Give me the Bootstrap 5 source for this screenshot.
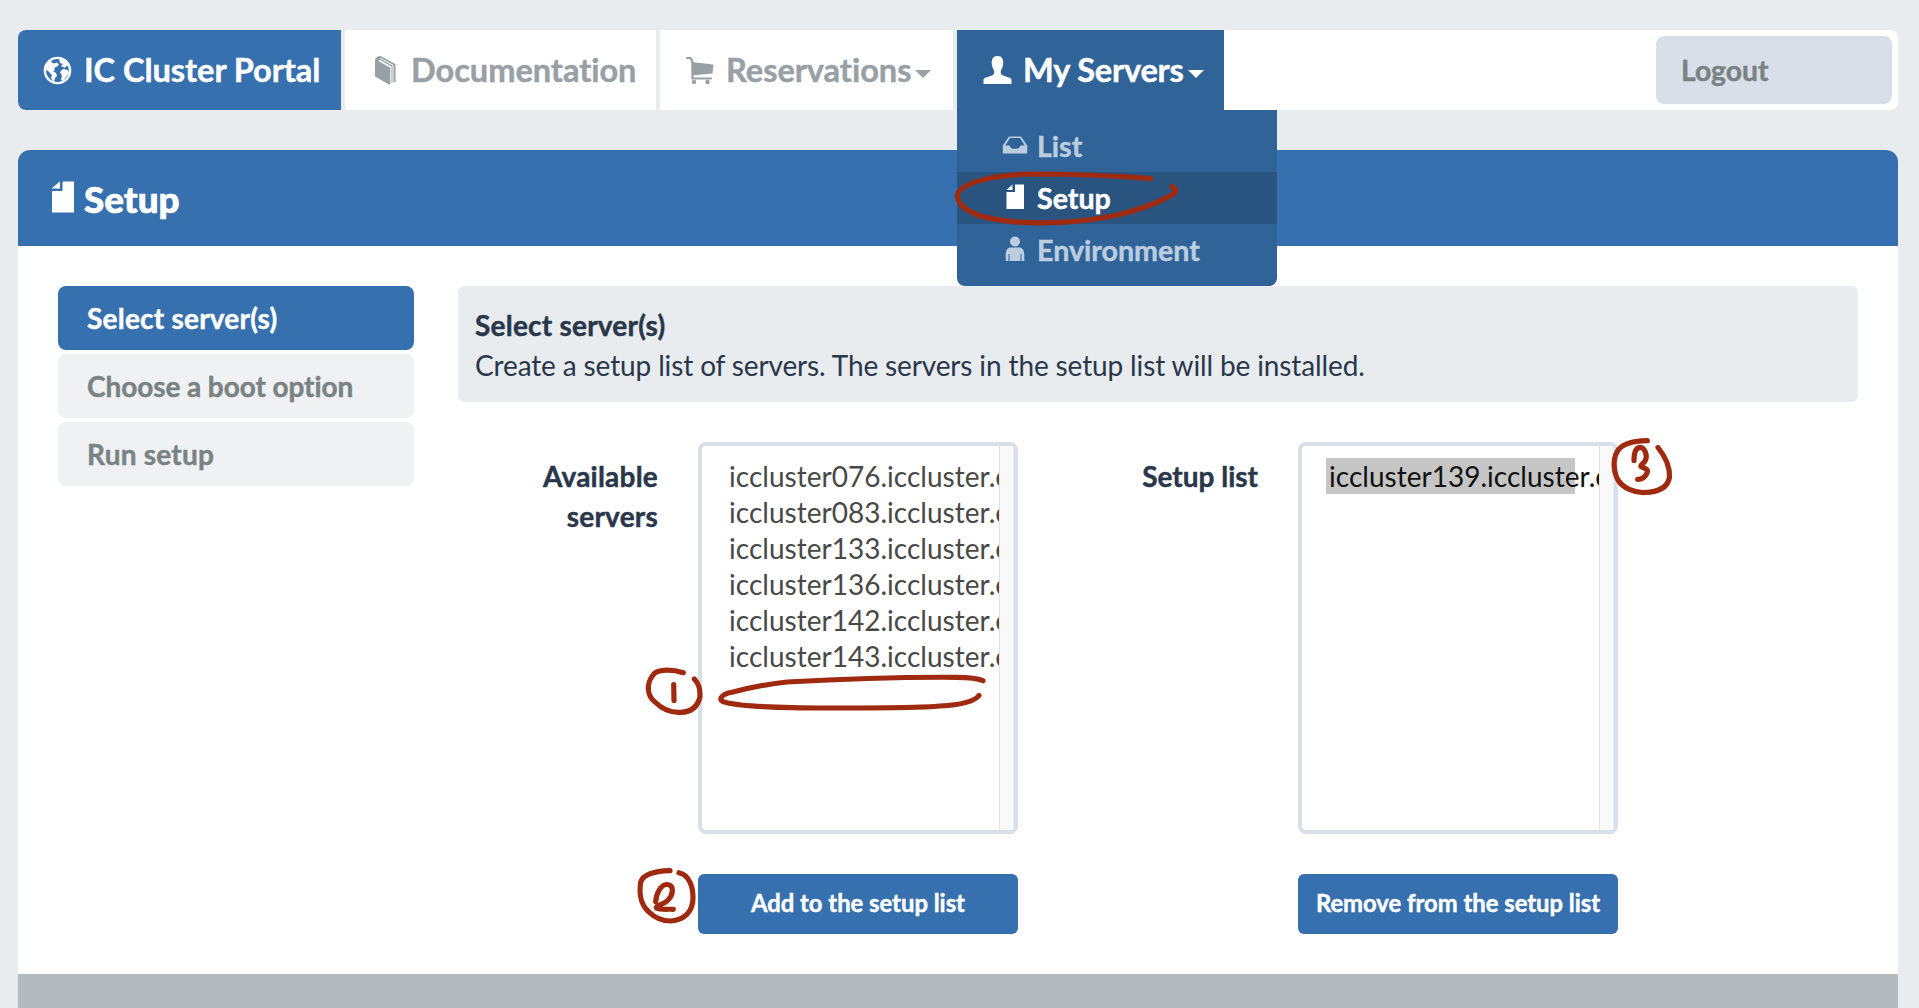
<!DOCTYPE html>
<html lang="en">
<head>
<meta charset="utf-8">
<meta name="viewport" content="width=device-width, initial-scale=1">
<title>IC Cluster Portal - Setup</title>
<link href="https://cdn.jsdelivr.net/npm/bootstrap@5.3.0/dist/css/bootstrap.min.css" rel="stylesheet">
<style>
:root{--ic-blue:#3670ae;--ic-dark:#306398;--ic-bg:#e8ecef;--ic-ink:#2a374b;--ic-border:#d8dfe9}
body{font-family:Lato,"Open Sans",sans-serif;font-size:28px;line-height:40px;color:var(--ic-ink);background:var(--ic-bg);height:1008px;overflow:hidden}
.page-wrap{padding:30px 21px 0 18px}
.ic-nav,.side-nav,.list-label,.btn-ic,.note-box strong{-webkit-text-stroke:.45px currentColor}
.ic-nav{height:80px;background:#fff;border-radius:8px;margin-bottom:40px;font-size:32.6px;font-weight:700;line-height:80px}
.ic-nav>li{border-right:4px solid var(--ic-bg);white-space:nowrap;flex:none}
.ic-nav .nav-link{padding:0;color:#99a0a5;height:80px;display:flex;align-items:center;letter-spacing:-.05px}
.ic-nav .nav-link svg{flex:none}
.li-brand{width:327px}
.li-brand .nav-link{background:var(--ic-blue);color:#fff;border-radius:8px 0 0 8px;padding-left:25px}
.li-docs{width:315px}.li-docs .nav-link{padding-left:30px}
.li-res{width:297px}.li-res .nav-link{padding-left:26px}
.ic-nav>.li-srv{width:267px;border:0}
.li-srv .nav-link,.li-srv .nav-link:hover{background:var(--ic-dark);color:#fff;padding-left:26px}
.li-srv .nav-link span{letter-spacing:-.2px}
.caret-dn{border:8px solid transparent;border-top-color:currentColor;border-bottom:0;margin:8px 0 0 4px}
.ic-menu.dropdown-menu{left:0;top:80px;width:320px;height:176px;margin:0;padding:10px 0;border:0;border-radius:0 0 8px 8px;background:var(--ic-dark);font-size:28.6px}
.ic-menu .dropdown-item{display:flex;align-items:center;height:52px;line-height:52px;padding:0 0 0 45px;font-weight:700;color:#bccde0}
.ic-menu .dropdown-item svg{margin-right:9px;flex:none}
.ic-menu .dropdown-item.active{background:#2a5480;color:#fff}
.btn-out{width:236px;height:68px;border-radius:8px;background:var(--ic-border);color:#7a8384;font-size:28.3px;font-weight:700;text-align:left;padding:0 0 0 24px;margin-right:6px;-webkit-text-stroke:.45px currentColor}
.panel-head{height:96px;border-radius:12px 12px 0 0;background:var(--ic-blue);color:#fff;padding-left:34px}
.panel-head h1{font-size:36.8px;line-height:96px;font-weight:900;margin:2px 0 0 10px;-webkit-text-stroke:.7px currentColor}
.panel-main{background:#fff;height:728px;padding:40px}
.side-nav{width:356px;margin-right:44px;flex:none;gap:4px}
.side-nav .nav-link{height:64px;line-height:65px;padding:0 0 0 29px;border-radius:8px;background:#eff1f3;color:#7a8384;font-weight:700;letter-spacing:-.08px}
.side-nav .nav-link.active{background:var(--ic-blue);color:#fff}
.note-box{background:var(--ic-bg);border-radius:6px;height:116px;padding:19px 17px;margin-bottom:40px}
.note-box p{letter-spacing:-.13px}
.wide-t{letter-spacing:.22px}
.lists-row{padding-left:60px}
.list-label{width:140px;padding-top:14px;margin-right:40px;text-align:right;font-weight:700;color:var(--ic-ink)}
.list-col{width:320px}
.list-box{height:392px;border:4px solid var(--ic-border);border-radius:8px;background:#fff;overflow:hidden;margin-bottom:40px}
.opts{flex:1;min-width:0;overflow:hidden;padding:12px 0 0 24px;white-space:nowrap;line-height:36px;color:#484848;letter-spacing:.02px}
.opts div{padding-left:3px;height:36px;width:249px}
.opts .picked{background:#c6c6c6;color:#111}
.track{width:15px;background:#f9f9f9;border-left:1px solid #e3e3e3;border-right:1px solid #eceff3}
.btn-ic,.btn-ic:hover{height:60px;width:320px;background:var(--ic-blue);color:#fff;border:0;border-radius:6px;font-weight:700;font-size:23.8px;padding:0;white-space:nowrap}
.foot-bar{height:34px;background:#b5babe}
.ink{position:absolute;left:0;top:0;z-index:2000;pointer-events:none}
</style>
<script src="https://cdn.jsdelivr.net/npm/bootstrap@5.3.0/dist/js/bootstrap.bundle.min.js"></script>
</head>
<body>
<div class="page-wrap">
  <ul class="ic-nav nav flex-nowrap align-items-center list-unstyled">
    <li class="li-brand"><a class="nav-link" href="#">
      <svg width="29" height="29" viewBox="0 0 29 29" style="margin-right:12px"><circle cx="14.5" cy="14.5" r="12.6" fill="none" stroke="#fff" stroke-width="2.4"/><path fill="#fff" d="M2 9 6 5 9 4 8 6 11 7.500 14 6.500 16 8.500 13.500 11 11 12 12 14 10 15 13 17 14 20 12 22 11 26 8 22 9 19 5 15 1 13ZM16 3 21 4 26 9 27 11 23 10 22 12 18 10 20 8 17 7ZM17 16 20 13 25 14 26 17 23 21 20 25 18 24 19 20Z"/></svg>
      <span>IC Cluster Portal</span></a></li>
    <li class="li-docs"><a class="nav-link" href="#">
      <svg width="21" height="29" viewBox="0 0 21 29" style="margin-right:15px"><path fill="#99a0a5" d="M0 4.500C0 2 3 0 5.500 0L20.500 8V26L16.500 27V10.500L5 4 3 4.800 15.300 11.800V28.500L13 28 0 20.500Z"/><path fill="none" stroke="#fff" stroke-width="1" d="M5.500 2.400 18 9.200V27"/></svg>
      <span>Documentation</span></a></li>
    <li class="li-res"><a class="nav-link" href="#">
      <svg width="28" height="28" viewBox="0 0 28 28" style="margin-right:12px"><path fill="none" stroke="#99a0a5" stroke-width="2.200" stroke-linecap="round" d="M1 2H4.500L6.500 6V22.500H25"/><path fill="#99a0a5" d="M5.500 6 27.500 8.500 26.500 17.500 6 19.500Z"/><circle cx="8" cy="26" r="2.200" fill="#99a0a5"/><circle cx="21.500" cy="26" r="2.200" fill="#99a0a5"/></svg>
      <span>Reservations</span><i class="caret-dn"></i></a></li>
    <li class="li-srv position-relative"><a class="nav-link" href="#">
      <svg width="29" height="28" viewBox="0 0 29 28" style="margin-right:11px"><path fill="#fff" d="M14.500 0C19 0 20.500 3.500 20.200 7.500 20 11 19 12.500 18 14.500 17.200 17 18 18.500 20 19.500 24 21 28.500 21.500 28.500 24V28H.5V24C.5 21.500 5 21 9 19.500 11 18.500 11.800 17 11 14.500 10 12.500 9 11 8.800 7.500 8.500 3.500 10 0 14.500 0Z"/></svg>
      <span>My Servers</span><i class="caret-dn"></i></a>
      <div class="dropdown-menu ic-menu show">
        <a class="dropdown-item" href="#"><svg width="26" height="18" viewBox="0 0 26 18" style="margin-top:-3px"><path fill="#bccde0" fill-rule="evenodd" d="M7 .5H19L25.200 9.500V17.500H.8V9.500ZM8 2 3.200 9.500H7.500C8.500 12.300 10 12.800 13 12.800S17.500 12.300 18.500 9.500H22.800L18 2Z"/></svg>List</a>
        <a class="dropdown-item active" href="#"><svg width="26" height="26" viewBox="0 0 26 26" style="margin-top:-2px"><path fill="#fff" d="M4.500 8H13V.5H22V25H4.500ZM10.500 .5V6H4.500Z"/></svg>Setup</a>
        <a class="dropdown-item" href="#"><svg width="26" height="26" viewBox="0 0 26 26" style="margin-top:-2px"><circle cx="13" cy="5.500" r="5" fill="#bccde0"/><path fill="#bccde0" d="M7.500 11.500H18.500C21.500 12.500 22.300 16 22.300 19.500V25H19.500V18H18.500V25H7.500V18H6.500V25H3.700V19.500C3.700 16 4.500 12.500 7.500 11.500Z"/></svg>Environment</a>
      </div></li>
    <li class="ms-auto border-0 d-flex align-items-center"><button class="btn btn-out" type="button">Logout</button></li>
  </ul>

  <header class="panel-head d-flex align-items-center">
    <svg width="22" height="32" viewBox="0 0 22 32" style="margin-top:-3px"><path fill="#fff" d="M0 10H10.500V.5H22V31.500H0ZM8 .5V7.500H0V7Z"/></svg>
    <h1>Setup</h1>
  </header>
  <main class="panel-main d-flex align-items-start">
    <nav class="side-nav nav flex-column">
      <a class="nav-link active" href="#"><span class="wide-t">Select server(s)</span></a>
      <a class="nav-link" href="#">Choose a boot option</a>
      <a class="nav-link" href="#"><span class="wide-t">Run setup</span></a>
    </nav>
    <section class="flex-grow-1">
      <div class="note-box"><strong class="d-block wide-t">Select server(s)</strong><p class="m-0">Create a setup list of servers. The servers in the setup list will be installed.</p></div>
      <div class="lists-row d-flex">
        <div class="list-label wide-t">Available servers</div>
        <div class="list-col">
          <div class="list-box d-flex">
            <div class="opts">
              <div>iccluster076.iccluster.epfl.ch</div>
              <div>iccluster083.iccluster.epfl.ch</div>
              <div>iccluster133.iccluster.epfl.ch</div>
              <div>iccluster136.iccluster.epfl.ch</div>
              <div>iccluster142.iccluster.epfl.ch</div>
              <div>iccluster143.iccluster.epfl.ch</div>
            </div>
            <div class="track"></div>
          </div>
          <button class="btn btn-ic" type="button">Add to the setup list</button>
        </div>
        <div class="list-label" style="margin-left:100px">Setup list</div>
        <div class="list-col">
          <div class="list-box d-flex">
            <div class="opts"><div class="picked">iccluster139.iccluster.epfl.ch</div></div>
            <div class="track"></div>
          </div>
          <button class="btn btn-ic" type="button">Remove from the setup list</button>
        </div>
      </div>
    </section>
  </main>
  <footer class="foot-bar"></footer>
</div>

<!-- hand-drawn step markers -->
<svg class="ink" width="1919" height="1008" viewBox="0 0 1919 1008" fill="none" stroke="#a02a10" stroke-width="5.200" stroke-linecap="round" stroke-linejoin="round">
  <path d="M1150.700 178.500C1125 176.500 1085 174 1030 174C990 175 958 184 957.300 196C958 208 975 218 1010 221.300C1045 225 1085 222 1117 215C1145 209 1160 201 1168 197C1178 192 1177 189 1172 186.700"/>
  <path d="M683.300 672.700C675 670 658 668 653 675C646 684 647 696 655 702C662 709 671 713 681 712.300C693 712 698 705 700 697C700 688 699 684 694.300 679"/>
  <path d="M673.700 684.500 674 700.500"/>
  <path d="M983 680.700C977 678 970 677.300 957 677.300C910 677 840 679 787 682C765 684 745 689 733 692C720 694 717 701 726 702.500C740 706 780 708 830 708C870 708 920 708 940 706C960 705 974 702 979 695.500"/>
  <path d="M670 870.700C658 871 644 873 640.700 882C639 894 640 904 649 912C655 918 663 921 671 921C684 920 693 912 693 898C693 888 690 875 679 872.700"/>
  <path d="M655.700 901.700C656 894 661 884 667 884.500C675 885 673 895 668 900C665 904 655 906 656.500 908C660 910 668 909 673.300 909.300"/>
  <path d="M1647.300 440.700C1632 441 1621 444 1617 452C1613 459 1613 471 1618 480C1623 488 1634 493 1645 492.500C1659 492 1668 487 1669.500 477C1670 466 1664 455 1658 447.500"/>
  <path d="M1634 460.500C1634 452 1636 447.300 1640.500 447.300C1645 448 1648 456 1645 461C1644 463 1640 465 1641 466.500C1644 468 1649 469 1647 473C1645 478 1641 479.300 1637.700 479.300"/>
</svg>
</body>
</html>
